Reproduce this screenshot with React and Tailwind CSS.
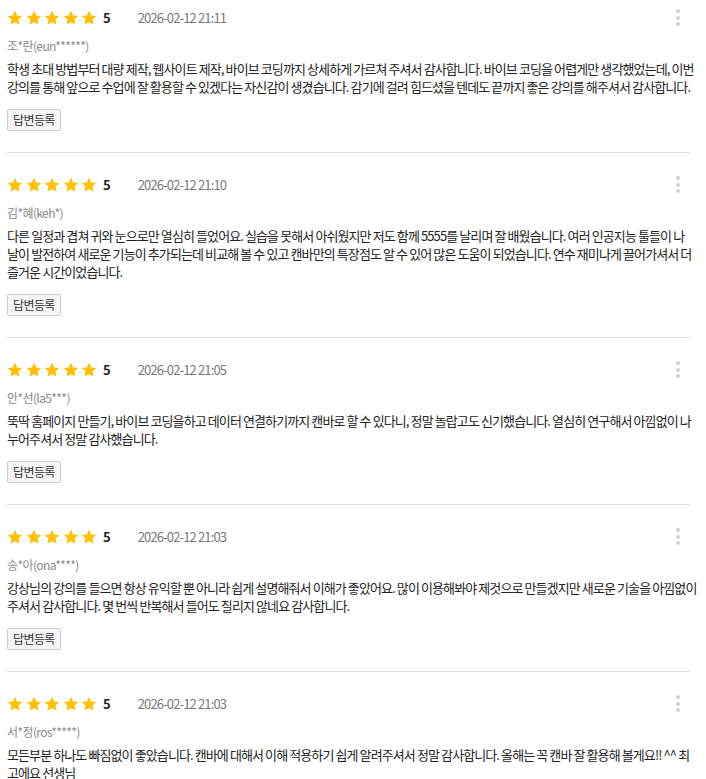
import React from "react";

const reviews = [
  {
    date: "2026-02-12 21:11",
    user: "조*란(eun******)",
    lines: [
      "학생 초대 방법부터 대량 제작, 웹사이트 제작, 바이브 코딩까지 상세하게 가르쳐 주셔서 감사합니다. 바이브 코딩을 어렵게만 생각했었는데, 이번",
      "강의를 통해 앞으로 수업에 잘 활용할 수 있겠다는 자신감이 생겼습니다. 감기에 걸려 힘드셨을 텐데도 끝까지 좋은 강의를 해주셔서 감사합니다.",
    ],
  },
  {
    date: "2026-02-12 21:10",
    user: "김*혜(keh*)",
    lines: [
      "다른 일정과 겹쳐 귀와 눈으로만 열심히 들었어요. 실습을 못해서 아쉬웠지만 저도 함께 5555를 날리며 잘 배웠습니다. 여러 인공지능 툴들이 나",
      "날이 발전하여 새로운 기능이 추가되는데 비교해 볼 수 있고 캔바만의 특장점도 알 수 있어 많은 도움이 되었습니다. 연수 재미나게 끌어가셔서 더",
      "즐거운 시간이었습니다.",
    ],
  },
  {
    date: "2026-02-12 21:05",
    user: "안*선(la5***)",
    lines: [
      "뚝딱 홈페이지 만들기, 바이브 코딩을하고 데이터 연결하기까지 캔바로 할 수 있다니, 정말 놀랍고도 신기했습니다. 열심히 연구해서 아낌없이 나",
      "누어주셔서 정말 감사했습니다.",
    ],
  },
  {
    date: "2026-02-12 21:03",
    user: "송*아(ona****)",
    lines: [
      "강상님의 강의를 들으면 항상 유익할 뿐 아니라 쉽게 설명해줘서 이해가 좋았어요. 많이 이용해봐야 제것으로 만들겠지만 새로운 기술을 아낌없이",
      "주셔서 감사합니다. 몇 번씩 반복해서 들어도 질리지 않네요 감사합니다.",
    ],
  },
  {
    date: "2026-02-12 21:03",
    user: "서*정(ros*****)",
    lines: [
      "모든부분 하나도 빠짐없이 좋았습니다. 캔바에 대해서 이해 적용하기 쉽게 알려주셔서 정말 감사합니다. 올해는 꼭 캔바 잘 활용해 볼게요!! ^^ 최",
      "고에요 선생님",
    ],
    last: true,
  },
];

function Star() {
  return (
    <svg width="16" height="16" viewBox="0 0 24 24" className="shrink-0">
      <path
        d="M12 1.2l3.3 6.9 7.5 1-5.5 5.2 1.4 7.5L12 18.2l-6.7 3.6 1.4-7.5L1.2 9.1l7.5-1z"
        fill="#FFC107"
      />
    </svg>
  );
}

function Review({ r, first }) {
  return (
    <div
      className={
        (first ? "pt-[7px] " : "pt-[21px] ") +
        (r.last ? "" : "pb-[21px] border-b border-[#dddddd]")
      }
    >
      <div className="flex items-center h-[21px]">
        <div className="flex items-center gap-[2.5px]">
          <Star />
          <Star />
          <Star />
          <Star />
          <Star />
        </div>
        <span className="ml-[6px] text-[13px] font-bold text-[#222]">5</span>
        <span className="ml-[27px] text-[13px] text-[#777] tracking-[-0.85px]">{r.date}</span>
        <div className="ml-auto mr-[10px] flex flex-col gap-[2.5px]">
          <span className="block w-[4px] h-[4px] rounded-full bg-[#cfcfcf]" />
          <span className="block w-[4px] h-[4px] rounded-full bg-[#cfcfcf]" />
          <span className="block w-[4px] h-[4px] rounded-full bg-[#cfcfcf]" />
        </div>
      </div>
      <div className="mt-[9px] text-[12px] leading-[18px] text-[#888] tracking-[-0.6px]">{r.user}</div>
      <p className="mt-[5px] mr-[-12px] text-[13px] leading-[18px] text-[#222] tracking-[-0.9px] whitespace-nowrap">
        {r.lines.map((l, i) => (
          <React.Fragment key={i}>
            {i > 0 && <br />}
            {l}
          </React.Fragment>
        ))}
      </p>
      {!r.last && (
        <button className="mt-[13px] h-[22px] px-[5px] text-[12px] text-[#333] bg-[#f6f6f6] border border-[#cccccc] rounded-[2px] leading-[20px] tracking-[-0.6px]">
          답변등록
        </button>
      )}
    </div>
  );
}

export default function App() {
  return (
    <div
      className="bg-white w-[706px] min-h-[779px] pl-[7px] pr-[16px] overflow-hidden"
      style={{ fontFamily: '"Noto Sans CJK KR", "Noto Sans", sans-serif' }}
    >
      {reviews.map((r, i) => (
        <Review key={i} r={r} first={i === 0} />
      ))}
    </div>
  );
}
